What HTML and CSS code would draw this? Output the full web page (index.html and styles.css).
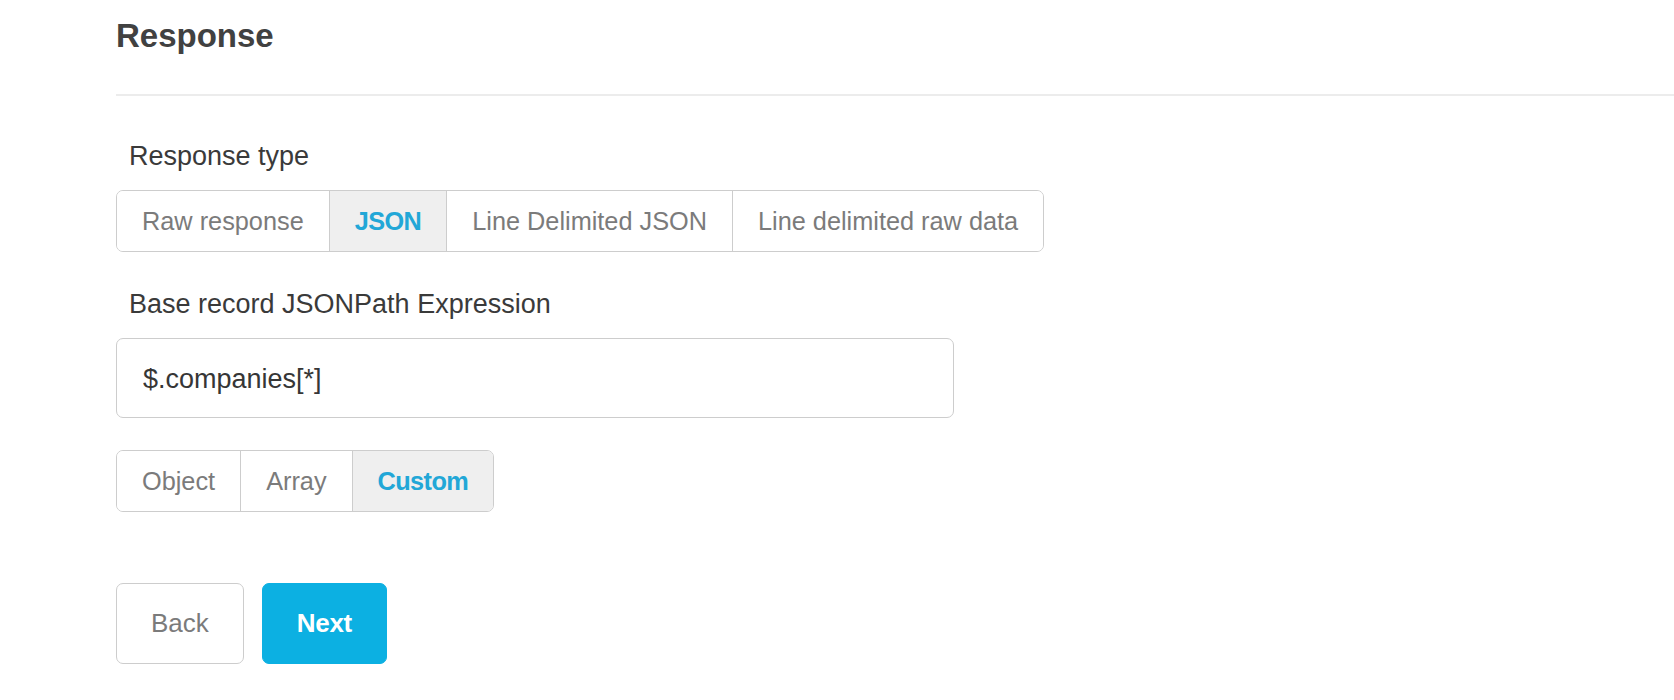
FILE: index.html
```html
<!DOCTYPE html>
<html lang="en">
<head>
<meta charset="utf-8">
<title>Response</title>
<link rel="stylesheet" href="styles.css">
</head>
<body>
<main class="page">
  <header class="section-head">
    <h1 class="section-title">Response</h1>
  </header>

  <div class="field">
    <div class="field-label">Response type</div>
    <div class="seg">
      <button class="seg-item">Raw response</button>
      <button class="seg-item is-active">JSON</button>
      <button class="seg-item">Line Delimited JSON</button>
      <button class="seg-item">Line delimited raw data</button>
    </div>
  </div>

  <div class="field field-second">
    <div class="field-label">Base record JSONPath Expression</div>
    <input class="text-input" type="text" value="$.companies[*]">
  </div>

  <div class="seg seg-small">
    <button class="seg-item">Object</button>
    <button class="seg-item">Array</button>
    <button class="seg-item is-active">Custom</button>
  </div>

  <div class="actions">
    <button class="btn btn-back">Back</button>
    <button class="btn btn-next">Next</button>
  </div>
</main>
</body>
</html>
```

FILE: styles.css
```css
html, body {
  margin: 0;
  padding: 0;
  background: #ffffff;
}

body {
  font-family: "Liberation Sans", Arial, sans-serif;
  color: #3b3b3b;
}

.page {
  padding-left: 116px;
}

.section-head {
  padding-top: 15px;
  padding-bottom: 38px;
  border-bottom: 2px solid #ececec;
}

.section-title {
  margin: 0;
  font-size: 33px;
  line-height: 41px;
  font-weight: 700;
  color: #414141;
}

.field {
  padding-top: 44px;
}

.field-second {
  padding-top: 36px;
}

.field-label {
  margin-left: 13px;
  font-size: 27px;
  line-height: 32px;
  color: #3a3a3a;
  margin-bottom: 18px;
}

.seg {
  display: inline-flex;
  border: 1px solid #cdcdcd;
  border-radius: 7px;
  overflow: hidden;
}

.seg-item {
  font-family: inherit;
  font-size: 25.3px;
  line-height: 60px;
  height: 60px;
  padding: 0 25px;
  margin: 0;
  border: 0;
  border-left: 1px solid #cdcdcd;
  background: #ffffff;
  color: #7b7b7b;
  cursor: pointer;
}

.seg-item:first-child {
  border-left: 0;
}

.seg-item.is-active {
  background: #efefef;
  color: #22a7d7;
  font-weight: 700;
  letter-spacing: -0.6px;
}

.text-input {
  display: block;
  box-sizing: border-box;
  width: 838px;
  height: 80px;
  margin: 0;
  padding: 2px 26px 0;
  border: 1px solid #cdcdcd;
  border-radius: 7px;
  font-family: inherit;
  font-size: 27px;
  color: #363636;
  background: #ffffff;
  outline: none;
}

.seg-small {
  margin-top: 32px;
}

.actions {
  display: flex;
  gap: 18px;
  margin-top: 71px;
}

.btn {
  box-sizing: border-box;
  height: 81px;
  padding: 0 34px;
  border-radius: 7px;
  font-family: inherit;
  font-size: 26px;
  cursor: pointer;
}

.btn-back {
  border: 1px solid #cdcdcd;
  background: #ffffff;
  color: #7b7b7b;
}

.btn-next {
  border: 1px solid #0cb0e2;
  background: #0cb0e2;
  color: #ffffff;
  font-weight: 700;
  padding: 0 34px;
  letter-spacing: -0.3px;
}
```
